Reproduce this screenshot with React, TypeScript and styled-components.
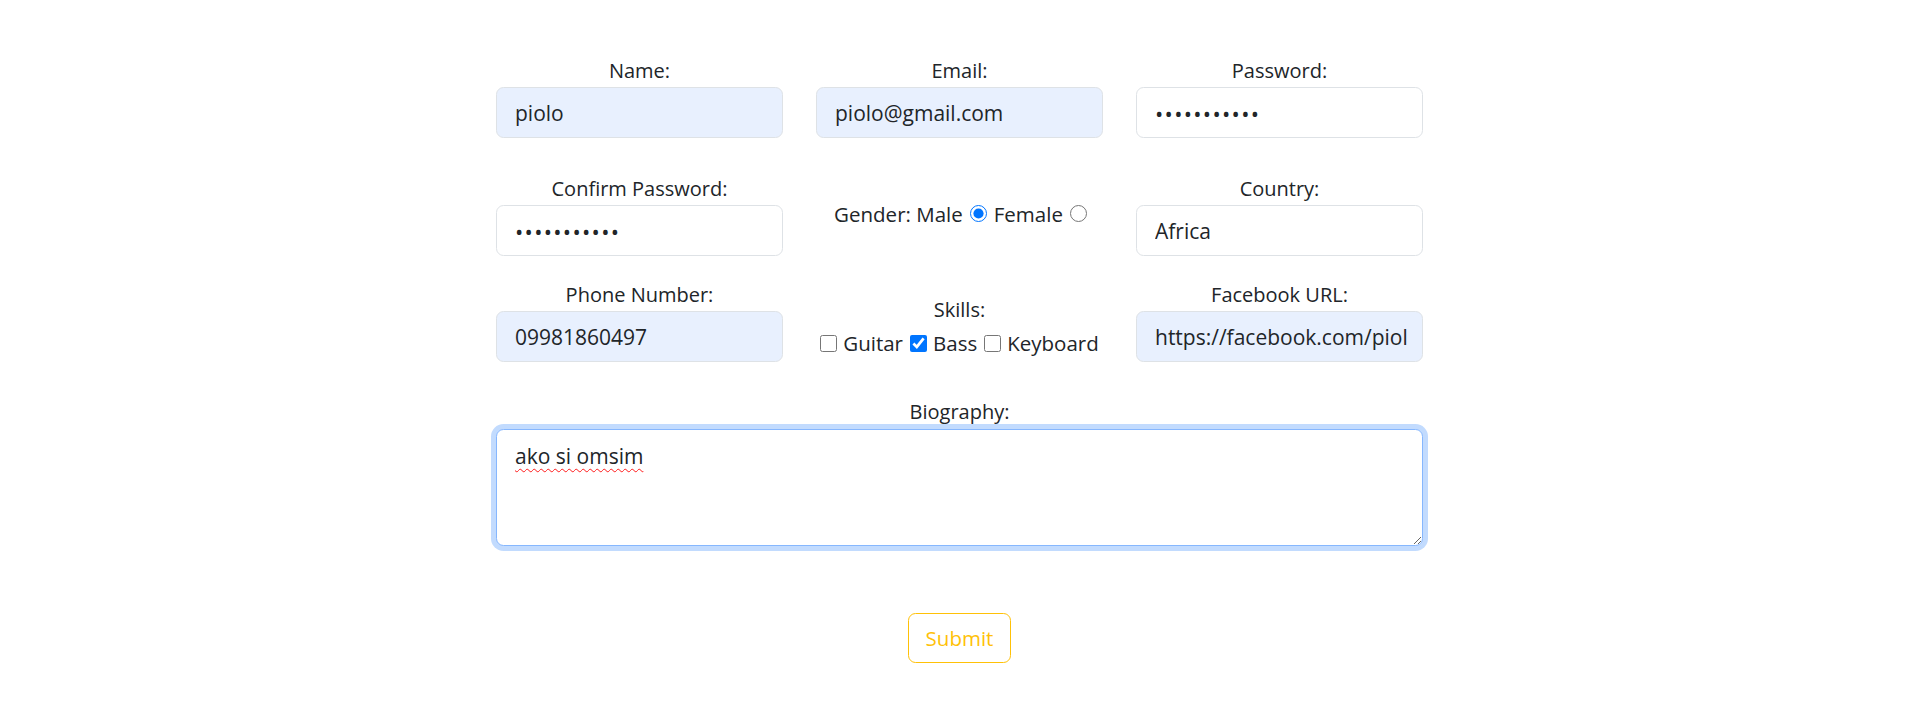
import React from "react";
import styled, { createGlobalStyle } from "styled-components";

const GlobalStyle = createGlobalStyle`
  html, body {
    margin: 0;
    padding: 0;
    background: #ffffff;
  }
  body {
    font-family: "Open Sans", "Noto Sans", sans-serif;
    font-size: 20px;
    line-height: 30px;
    color: #212529;
  }
  * { box-sizing: border-box; }
`;

const Page = styled.div`
  display: flex;
  flex-direction: column;
  align-items: center;
  padding-top: 56px;
`;

const Form = styled.form`
  width: 927px;
  display: flex;
  flex-direction: column;
  align-items: center;
`;

const FieldRow = styled.div<{ $mt: number }>`
  width: 100%;
  display: grid;
  grid-template-columns: repeat(3, 1fr);
  column-gap: 33px;
  margin-top: ${(p) => p.$mt}px;
`;

const Field = styled.div`
  display: flex;
  flex-direction: column;
`;

const Label = styled.label`
  display: block;
  text-align: center;
  font-size: 20px;
  line-height: 30px;
  margin-bottom: 1px;
`;

const TextInput = styled.input<{ $filled?: boolean; $secret?: boolean }>`
  width: 100%;
  height: 51px;
  padding: 0 15px 0 18px;
  font-family: "Open Sans", "Noto Sans", sans-serif;
  font-size: ${(p) => (p.$secret ? 22 : 21)}px;
  letter-spacing: ${(p) => (p.$secret ? 1.3 : 0)}px;
  color: #212529;
  background: ${(p) => (p.$filled ? "#e8f0fe" : "#ffffff")};
  border: 1px solid #dee2e6;
  border-radius: 7.5px;
  outline: none;
`;

const GenderGroup = styled.div`
  align-self: center;
  margin-bottom: 3px;
  padding-left: 2px;
  display: flex;
  justify-content: center;
  align-items: center;
  font-size: 20.5px;
  line-height: 30px;
  white-space: nowrap;
`;

const Radio = styled.input<{ $last?: boolean }>`
  width: 17px;
  height: 17px;
  margin: 0 ${(p) => (p.$last ? 0 : 7)}px 0 7px;
  accent-color: #0075ff;
`;

const SkillsGroup = styled.div`
  align-self: end;
  margin-bottom: 4px;
  display: flex;
  flex-direction: column;
  align-items: center;
`;

const SkillsTitle = styled.div`
  line-height: 30px;
  text-align: center;
`;

const CheckLine = styled.div`
  margin-top: 3px;
  display: flex;
  align-items: center;
  font-size: 20.5px;
  line-height: 30px;
  white-space: nowrap;
`;

const Check = styled.input<{ $first?: boolean }>`
  width: 17px;
  height: 17px;
  margin: 0 6px 0 ${(p) => (p.$first ? 0 : 7)}px;
  accent-color: #0075ff;
`;

const BioField = styled.div`
  grid-column: 1 / -1;
  display: flex;
  flex-direction: column;
`;

const BioLabel = styled(Label)`
  margin-bottom: 2px;
`;

const TextArea = styled.textarea`
  width: 100%;
  height: 117px;
  padding: 11px 15px 9px 18px;
  font-family: "Open Sans", "Noto Sans", sans-serif;
  font-size: 21px;
  line-height: 30px;
  color: #212529;
  background: #ffffff;
  border: 1px solid #86b7fe;
  border-radius: 7.5px;
  box-shadow: 0 0 0 5px rgba(13, 110, 253, 0.25);
  outline: none;
  resize: vertical;
  text-decoration: underline wavy #ff1a1a;
  text-decoration-thickness: 1.3px;
  text-underline-offset: 4px;
`;

const SubmitButton = styled.button`
  margin-top: 67px;
  width: 103px;
  height: 50px;
  padding: 0;
  font-family: "Open Sans", "Noto Sans", sans-serif;
  font-size: 20.5px;
  color: #ffc107;
  background: transparent;
  border: 1px solid #ffc107;
  border-radius: 7.5px;
  cursor: pointer;
`;

export default function App() {
  return (
    <>
      <GlobalStyle />
      <Page>
        <Form onSubmit={(e) => e.preventDefault()}>
          <FieldRow $mt={0}>
            <Field>
              <Label htmlFor="name">Name:</Label>
              <TextInput id="name" type="text" defaultValue="piolo" $filled />
            </Field>
            <Field>
              <Label htmlFor="email">Email:</Label>
              <TextInput id="email" type="email" defaultValue="piolo@gmail.com" $filled />
            </Field>
            <Field>
              <Label htmlFor="password">Password:</Label>
              <TextInput id="password" type="password" defaultValue="piolo123456" $secret />
            </Field>
          </FieldRow>

          <FieldRow $mt={36}>
            <Field>
              <Label htmlFor="confirm">Confirm Password:</Label>
              <TextInput id="confirm" type="password" defaultValue="piolo123456" $secret />
            </Field>
            <GenderGroup>
              <span>Gender: Male</span>
              <Radio type="radio" name="gender" value="male" defaultChecked />
              <span>Female</span>
              <Radio type="radio" name="gender" value="female" $last />
            </GenderGroup>
            <Field>
              <Label htmlFor="country">Country:</Label>
              <TextInput id="country" type="text" defaultValue="Africa" />
            </Field>
          </FieldRow>

          <FieldRow $mt={24}>
            <Field>
              <Label htmlFor="phone">Phone Number:</Label>
              <TextInput id="phone" type="text" defaultValue="09981860497" $filled />
            </Field>
            <SkillsGroup>
              <SkillsTitle>Skills:</SkillsTitle>
              <CheckLine>
                <Check type="checkbox" $first />
                <span>Guitar</span>
                <Check type="checkbox" defaultChecked />
                <span>Bass</span>
                <Check type="checkbox" />
                <span>Keyboard</span>
              </CheckLine>
            </SkillsGroup>
            <Field>
              <Label htmlFor="fb">Facebook URL:</Label>
              <TextInput id="fb" type="url" defaultValue="https://facebook.com/piolo" $filled />
            </Field>
          </FieldRow>

          <FieldRow $mt={35}>
            <BioField>
              <BioLabel htmlFor="bio">Biography:</BioLabel>
              <TextArea id="bio" spellCheck={false} defaultValue="ako si omsim" />
            </BioField>
          </FieldRow>

          <SubmitButton type="submit">Submit</SubmitButton>
        </Form>
      </Page>
    </>
  );
}
